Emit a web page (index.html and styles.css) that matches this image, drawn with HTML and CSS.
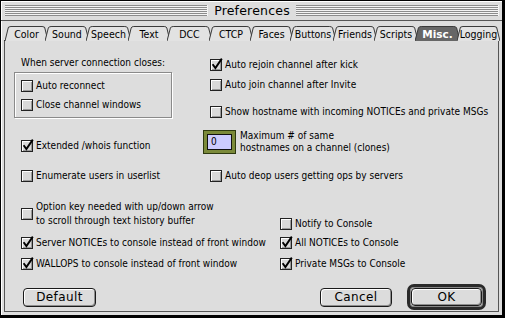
FILE: index.html
```html
<!DOCTYPE html>
<html>
<head>
<meta charset="utf-8">
<link rel="stylesheet" href="styles.css">
</head>
<body>
<div class="window">
  <div class="titlebar">
    <div class="stripes"></div>
    <div class="title">Preferences</div>
    <div class="stripes"></div>
  </div>
  <div class="body">
    <div class="tabs">
      <div class="tab w40"><svg class="tab-shape" viewBox="0 0 40 15" preserveAspectRatio="none"><path d="M0 15L3 2Q3.5 0.5 5.5 0.5H34.5Q36.5 0.5 37 2L40 15"/></svg><span>Color</span></div>
      <div class="tab w41"><svg class="tab-shape" viewBox="0 0 40 15" preserveAspectRatio="none"><path d="M0 15L3 2Q3.5 0.5 5.5 0.5H34.5Q36.5 0.5 37 2L40 15"/></svg><span>Sound</span></div>
      <div class="tab w42"><svg class="tab-shape" viewBox="0 0 40 15" preserveAspectRatio="none"><path d="M0 15L3 2Q3.5 0.5 5.5 0.5H34.5Q36.5 0.5 37 2L40 15"/></svg><span>Speech</span></div>
      <div class="tab w39"><svg class="tab-shape" viewBox="0 0 40 15" preserveAspectRatio="none"><path d="M0 15L3 2Q3.5 0.5 5.5 0.5H34.5Q36.5 0.5 37 2L40 15"/></svg><span>Text</span></div>
      <div class="tab w42"><svg class="tab-shape" viewBox="0 0 40 15" preserveAspectRatio="none"><path d="M0 15L3 2Q3.5 0.5 5.5 0.5H34.5Q36.5 0.5 37 2L40 15"/></svg><span>DCC</span></div>
      <div class="tab w41"><svg class="tab-shape" viewBox="0 0 40 15" preserveAspectRatio="none"><path d="M0 15L3 2Q3.5 0.5 5.5 0.5H34.5Q36.5 0.5 37 2L40 15"/></svg><span>CTCP</span></div>
      <div class="tab w40"><svg class="tab-shape" viewBox="0 0 40 15" preserveAspectRatio="none"><path d="M0 15L3 2Q3.5 0.5 5.5 0.5H34.5Q36.5 0.5 37 2L40 15"/></svg><span>Faces</span></div>
      <div class="tab w43"><svg class="tab-shape" viewBox="0 0 40 15" preserveAspectRatio="none"><path d="M0 15L3 2Q3.5 0.5 5.5 0.5H34.5Q36.5 0.5 37 2L40 15"/></svg><span>Buttons</span></div>
      <div class="tab w41"><svg class="tab-shape" viewBox="0 0 40 15" preserveAspectRatio="none"><path d="M0 15L3 2Q3.5 0.5 5.5 0.5H34.5Q36.5 0.5 37 2L40 15"/></svg><span>Friends</span></div>
      <div class="tab w41"><svg class="tab-shape" viewBox="0 0 40 15" preserveAspectRatio="none"><path d="M0 15L3 2Q3.5 0.5 5.5 0.5H34.5Q36.5 0.5 37 2L40 15"/></svg><span>Scripts</span></div>
      <div class="tab w42 selected"><svg class="tab-shape" viewBox="0 0 40 15" preserveAspectRatio="none"><path d="M0 15L3 2Q3.5 0.5 5.5 0.5H34.5Q36.5 0.5 37 2L40 15"/></svg><span>Misc.</span></div>
      <div class="tab w40"><svg class="tab-shape" viewBox="0 0 40 15" preserveAspectRatio="none"><path d="M0 15L3 2Q3.5 0.5 5.5 0.5H34.5Q36.5 0.5 37 2L40 15"/></svg><span>Logging</span></div>
    </div>
    <div class="panel">
      <div class="row row-a">
        <div class="cell-left">
          <div class="label">When server connection closes:</div>
          <div class="groupbox">
            <div class="check"><span class="cb"></span><span>Auto reconnect</span></div>
            <div class="check gap5"><span class="cb"></span><span>Close channel windows</span></div>
          </div>
        </div>
        <div class="cell-right right-a">
          <div class="check"><span class="cb"><svg class="mark" viewBox="0 0 13 13"><path d="M2.6 6.2L5.4 10L11.8 0.6"/></svg></span><span>Auto rejoin channel after kick</span></div>
          <div class="check gap6"><span class="cb"></span><span>Auto join channel after Invite</span></div>
          <div class="check gap13"><span class="cb"></span><span>Show hostname with incoming NOTICEs and private MSGs</span></div>
        </div>
      </div>
      <div class="row row-b">
        <div class="cell-left">
          <div class="check push9"><span class="cb"><svg class="mark" viewBox="0 0 13 13"><path d="M2.6 6.2L5.4 10L11.8 0.6"/></svg></span><span>Extended /whois function</span></div>
        </div>
        <div class="cell-right field-row">
          <div class="focus-ring"><div class="field">0</div></div>
          <div class="field-label">Maximum # of same<br>hostnames on a channel (clones)</div>
        </div>
      </div>
      <div class="row row-c">
        <div class="cell-left">
          <div class="check"><span class="cb"></span><span>Enumerate users in userlist</span></div>
        </div>
        <div class="cell-right">
          <div class="check"><span class="cb"></span><span>Auto deop users getting ops by servers</span></div>
        </div>
      </div>
      <div class="row row-d wide">
        <div class="cell-left">
          <div class="check"><span class="cb"></span><span>Option key needed with up/down arrow<br>to scroll through text history buffer</span></div>
        </div>
        <div class="cell-right push17">
          <div class="check"><span class="cb"></span><span>Notify to Console</span></div>
        </div>
      </div>
      <div class="row row-e wide">
        <div class="cell-left">
          <div class="check"><span class="cb"><svg class="mark" viewBox="0 0 13 13"><path d="M2.6 6.2L5.4 10L11.8 0.6"/></svg></span><span>Server NOTICEs to console instead of front window</span></div>
        </div>
        <div class="cell-right">
          <div class="check"><span class="cb"><svg class="mark" viewBox="0 0 13 13"><path d="M2.6 6.2L5.4 10L11.8 0.6"/></svg></span><span>All NOTICEs to Console</span></div>
        </div>
      </div>
      <div class="row row-f wide">
        <div class="cell-left">
          <div class="check"><span class="cb"><svg class="mark" viewBox="0 0 13 13"><path d="M2.6 6.2L5.4 10L11.8 0.6"/></svg></span><span>WALLOPS to console instead of front window</span></div>
        </div>
        <div class="cell-right">
          <div class="check"><span class="cb"><svg class="mark" viewBox="0 0 13 13"><path d="M2.6 6.2L5.4 10L11.8 0.6"/></svg></span><span>Private MSGs to Console</span></div>
        </div>
      </div>
      <div class="buttons">
        <div class="btn btn-default">Default</div>
        <div class="spacer"></div>
        <div class="btn btn-cancel">Cancel</div>
        <div class="ok-ring"><div class="btn btn-ok">OK</div></div>
      </div>
    </div>
  </div>
</div>
</body>
</html>
```

FILE: styles.css
```css
* { box-sizing: border-box; }
html, body { margin: 0; padding: 0; background: #000; }
body { width: 505px; height: 318px; overflow: hidden; }

.window {
  width: 503px;
  height: 316px;
  border: 1px solid #000;
  background: #dddddd;
  box-shadow: 2px 2px 0 #000;
  display: flex;
  flex-direction: column;
  font-family: "DejaVu Sans Condensed", "DejaVu Sans", sans-serif;
  color: #000;
}

.titlebar {
  height: 20px;
  display: flex;
  align-items: center;
  padding: 0 3px 0 4px;
  gap: 5px;
  background: #dddddd;
  border-bottom: 1px solid #555;
  box-shadow: inset 1px 1px 0 #fff;
}
.stripes {
  flex: 1;
  height: 11px;
  background: repeating-linear-gradient(to bottom, #8c8c8c 0 1px, #f4f4f4 1px 2px);
  border-right: 1px solid #f4f4f4;
}
.title {
  font-family: "DejaVu Sans", sans-serif;
  font-size: 12.5px;
  letter-spacing: 0.2px;
  line-height: 18px;
  padding: 0 1px;
}

.body {
  flex: 1;
  display: flex;
  flex-direction: column;
  padding: 5px 3px 3px 3px;
  box-shadow: inset 1px 0 0 #fff;
}

.tabs {
  display: flex;
  height: 15px;
  padding-left: 1px;
  border-bottom: 1px solid #333;
}
.tab {
  display: grid;
  height: 15px;
  margin-right: -3px;
  font-size: 10.5px;
  line-height: 15px;
}
.tab > * { grid-area: 1 / 1; }
.tab span { text-align: center; padding-top: 1px; position: relative; }
.tab-shape { width: 100%; height: 15px; display: block; }
.tab-shape path { fill: #e2e2e2; stroke: #3a3a3a; stroke-width: 1; vector-effect: non-scaling-stroke; }
.tab.selected .tab-shape path { fill: #666666; }
.tab.selected span { color: #fff; font-weight: bold; font-family: "DejaVu Sans", sans-serif; font-size: 10.5px; }
.w39 { width: 42px; }
.w40 { width: 43px; }
.w41 { width: 44px; }
.w42 { width: 45px; }
.w43 { width: 46px; }

.panel {
  flex: 1;
  display: flex;
  flex-direction: column;
  padding: 15px 0 0 16px;
  border-left: 1px solid #555;
  border-right: 1px solid #555;
  border-bottom: 1px solid #555;
  font-size: 10px;
  letter-spacing: 0.02px;
}

.row { display: flex; }
.cell-left { width: 189px; flex: none; }
.wide .cell-left { width: 259px; }
.cell-right { display: flex; flex-direction: column; }

.check { display: flex; align-items: center; gap: 3px; line-height: 14px; white-space: nowrap; }
.cb {
  width: 12px; height: 12px; flex: none;
  border: 1px solid #222;
  background: #d9d9d9;
  box-shadow: inset 1px 1px 0 #fff, inset -1px -1px 0 #9a9a9a;
  display: block;
}
.mark { display: block; width: 13px; height: 13px; margin: -2px 0 0 -1px; overflow: visible; }
.mark path { fill: none; stroke: #000; stroke-width: 1.9; }

.label { line-height: 14px; }
.groupbox {
  margin: 2px 0 0 -7px;
  width: 158px;
  height: 46px;
  border: 1px solid #8a8a8a;
  box-shadow: 1px 1px 0 #fff, inset 1px 1px 0 #fff;
  padding: 6px 0 0 6px;
}
.gap5 { margin-top: 5px; }
.gap6 { margin-top: 6px; }
.gap13 { margin-top: 13px; }
.right-a { padding-top: 2px; }

.row-a { height: 62px; }
.row-b { margin-top: 12px; height: 24px; }
.push9 { margin-top: 9px; }
.field-row { flex-direction: row; margin-left: -7px; gap: 4px; }
.focus-ring {
  width: 33px; height: 24px;
  border: 1px solid #2e3a10;
  background: #7b8a3a;
  padding: 3px;
}
.field {
  width: 100%; height: 100%;
  border: 1px solid #111;
  background: #ccccff;
  padding-left: 3px;
  line-height: 14px;
  font-size: 10px;
}
.field-label { line-height: 12px; margin-top: 0; }

.row-c { margin-top: 15px; }
.row-d { margin-top: 17px; height: 28px; }
.push17 { padding-top: 17px; margin-left: 0; }
.row-e { margin-top: 8px; }
.row-f { margin-top: 7px; }

.buttons {
  display: flex;
  align-items: center;
  margin-top: 13px;
  height: 26px;
  padding-right: 12px;
}
.spacer { flex: 1; }
.btn {
  font-family: "DejaVu Sans", sans-serif;
  font-size: 12px;
  letter-spacing: 0.4px;
  text-align: center;
  height: 19px;
  line-height: 17px;
  border: 1px solid #1a1a1a;
  border-radius: 4px;
  background: #dcdcdc;
  box-shadow: inset 1px 1px 0 #fff, inset -1px -1px 0 #8e8e8e;
}
.btn-default { width: 73px; margin-left: 2px; }
.btn-cancel { width: 72px; margin-right: 15px; }
.ok-ring {
  width: 79px; height: 26px;
  border: 3px solid #2a2a2a;
  border-radius: 7px;
  padding: 1px;
  box-shadow: inset 0 0 0 1px #888;
  display: flex;
}
.btn-ok { width: 100%; height: 18px; line-height: 16px; }
```
